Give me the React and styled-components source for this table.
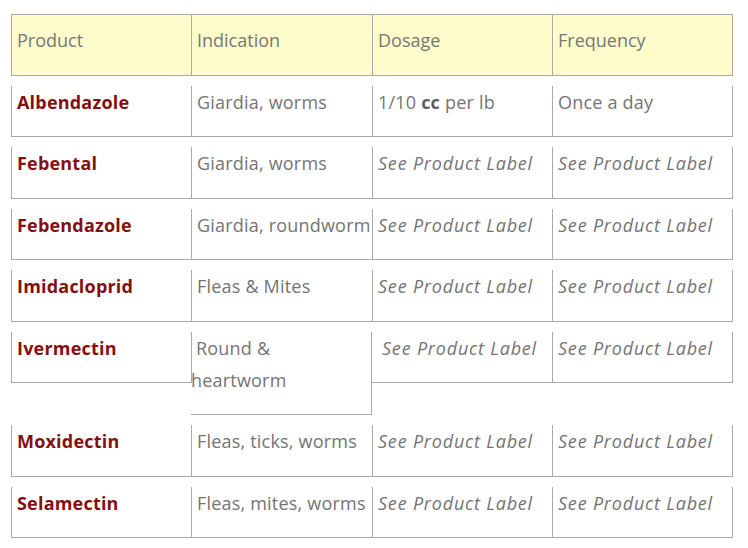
import React from 'react';
import styled, { createGlobalStyle } from 'styled-components';

const GlobalStyle = createGlobalStyle`
  html, body {
    margin: 0;
    padding: 0;
    background: #fff;
  }
  body {
    font-family: "Open Sans", Lato, sans-serif;
    color: #6b6b6b;
  }
`;

const Page = styled.div`
  padding: 14px 0 0 11px;
  width: 722px;
`;

const Table = styled.div`
  display: flex;
  flex-direction: column;
  gap: 10px;
`;

const Row = styled.div`
  display: grid;
  grid-template-columns: 180px 181px 180px 181px;
  align-items: start;
`;

const HeadCell = styled.div`
  background: #fdfcca;
  border: 1px solid #aaa;
  border-right: ${p => (p.$last ? '1px solid #aaa' : 'none')};
  padding: 9px 5px 18.5px;
  font-size: 18px;
  line-height: 32px;
  font-weight: 400;
  color: #777;
`;

const Cell = styled.div`
  position: relative;
  border-left: ${p => (p.$noLeft ? 'none' : '1px solid #aaa')};
  border-bottom: 1px solid #aaa;
  border-right: ${p => (p.$last || p.$right ? '1px solid #aaa' : 'none')};
  padding: 0 0 18.5px ${p => (p.$flush ? '0' : '5px')};
  text-indent: ${p => p.$indent || 0}px;
  font-size: 18px;
  line-height: 32px;
  font-weight: 400;
  color: #747474;
  font-style: ${p => (p.$italic ? 'italic' : 'normal')};
  letter-spacing: ${p => (p.$italic ? '0.8px' : '0.2px')};
  white-space: nowrap;

  &::before {
    content: ${p => (p.$shortLeft ? "''" : 'none')};
    position: absolute;
    left: 0;
    top: 0;
    height: 51px;
    border-left: 1px solid #aaa;
  }
`;

const Name = styled.span`
  font-weight: 700;
  letter-spacing: 0.2px;
  color: #850f10;
`;

const Strong = styled.b`
  font-weight: 700;
  color: #5f5f5f;
`;

const label = 'See Product Label';

const rows = [
  ['Febental', 'Giardia, worms'],
  ['Febendazole', 'Giardia, roundworm'],
  ['Imidacloprid', 'Fleas & Mites'],
];

const rowsAfter = [
  ['Moxidectin', 'Fleas, ticks, worms'],
  ['Selamectin', 'Fleas, mites, worms'],
];

function LabelRow({ name, indication }) {
  return (
    <Row>
      <Cell><Name>{name}</Name></Cell>
      <Cell>{indication}</Cell>
      <Cell $italic>{label}</Cell>
      <Cell $italic $last>{label}</Cell>
    </Row>
  );
}

export default function App() {
  return (
    <Page>
      <GlobalStyle />
      <Table>
        <Row>
          <HeadCell>Product</HeadCell>
          <HeadCell>Indication</HeadCell>
          <HeadCell>Dosage</HeadCell>
          <HeadCell $last>Frequency</HeadCell>
        </Row>
        <Row>
          <Cell><Name>Albendazole</Name></Cell>
          <Cell>Giardia, worms</Cell>
          <Cell>1/10 <Strong>cc</Strong> per lb</Cell>
          <Cell $last>Once a day</Cell>
        </Row>
        {rows.map(([n, i]) => (
          <LabelRow key={n} name={n} indication={i} />
        ))}
        <Row>
          <Cell><Name>Ivermectin</Name></Cell>
          <Cell $noLeft $shortLeft $right $flush $indent={5}>
            Round &amp;<br />heartworm
          </Cell>
          <Cell $italic $noLeft $indent={5}>{label}</Cell>
          <Cell $italic $last>{label}</Cell>
        </Row>
        {rowsAfter.map(([n, i]) => (
          <LabelRow key={n} name={n} indication={i} />
        ))}
      </Table>
    </Page>
  );
}
